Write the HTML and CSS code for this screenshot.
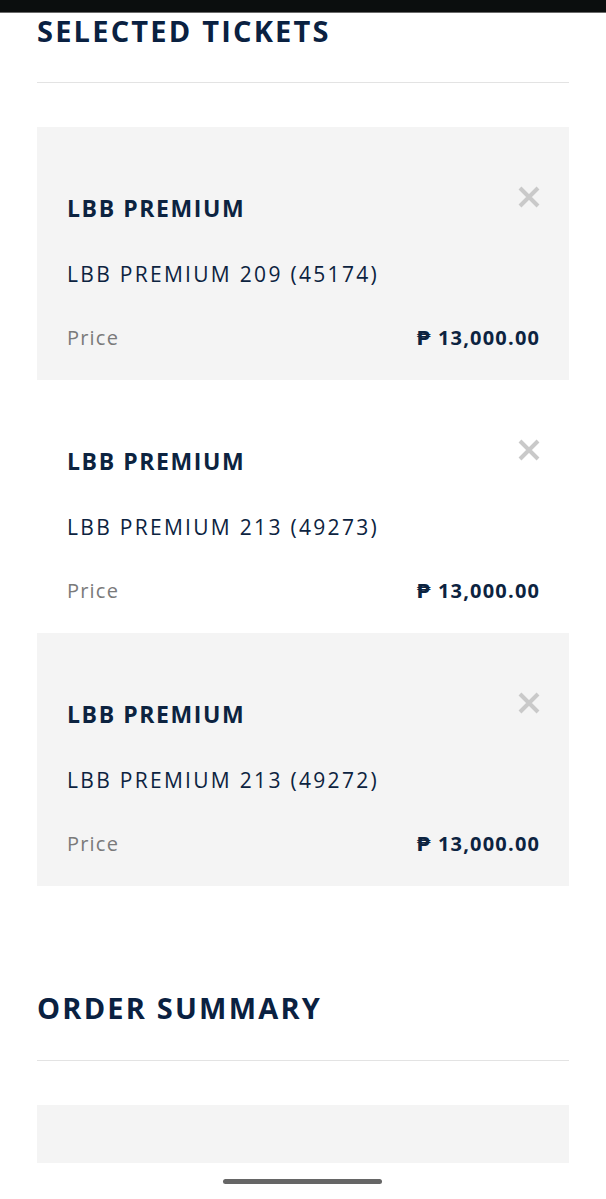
FILE: index.html
```html
<!DOCTYPE html>
<html lang="en">
<head>
<meta charset="utf-8">
<title>Selected Tickets</title>
<link rel="stylesheet" href="styles.css">
</head>
<body>
<div class="topbar"></div>
<main class="page">
  <h2 class="section-title">SELECTED TICKETS</h2>
  <hr class="divider">
  <div class="tickets">
    <div class="ticket ticket-shaded">
      <div class="ticket-head">
        <div class="ticket-title">LBB PREMIUM</div>
        <button class="close" aria-label="Remove">
          <svg viewBox="0 0 24 24" width="24" height="24"><path d="M3 3 L21 21 M21 3 L3 21" stroke="#c9c9c9" stroke-width="4" stroke-linecap="butt" fill="none"/></svg>
        </button>
      </div>
      <div class="ticket-name">LBB PREMIUM 209 (45174)</div>
      <div class="ticket-price">
        <span class="price-label">Price</span>
        <span class="price-value">₱ 13,000.00</span>
      </div>
    </div>
    <div class="ticket">
      <div class="ticket-head">
        <div class="ticket-title">LBB PREMIUM</div>
        <button class="close" aria-label="Remove">
          <svg viewBox="0 0 24 24" width="24" height="24"><path d="M3 3 L21 21 M21 3 L3 21" stroke="#c9c9c9" stroke-width="4" stroke-linecap="butt" fill="none"/></svg>
        </button>
      </div>
      <div class="ticket-name">LBB PREMIUM 213 (49273)</div>
      <div class="ticket-price">
        <span class="price-label">Price</span>
        <span class="price-value">₱ 13,000.00</span>
      </div>
    </div>
    <div class="ticket ticket-shaded">
      <div class="ticket-head">
        <div class="ticket-title">LBB PREMIUM</div>
        <button class="close" aria-label="Remove">
          <svg viewBox="0 0 24 24" width="24" height="24"><path d="M3 3 L21 21 M21 3 L3 21" stroke="#c9c9c9" stroke-width="4" stroke-linecap="butt" fill="none"/></svg>
        </button>
      </div>
      <div class="ticket-name">LBB PREMIUM 213 (49272)</div>
      <div class="ticket-price">
        <span class="price-label">Price</span>
        <span class="price-value">₱ 13,000.00</span>
      </div>
    </div>
  </div>
  <h2 class="section-title summary-title">ORDER SUMMARY</h2>
  <hr class="divider">
  <div class="summary-box"></div>
</main>
<div class="home-indicator"></div>
</body>
</html>
```

FILE: styles.css
```css
html, body {
  margin: 0;
  padding: 0;
  background: #ffffff;
  height: 1199px;
  overflow: hidden;
}
body {
  font-family: "Open Sans", "DejaVu Sans", sans-serif;
  color: #0c2340;
  position: relative;
}
.topbar {
  height: 12px;
  background: #0b0e0e;
  box-shadow: 0 1px 0 #6a6a6a;
}
.page {
  padding: 0 37px;
}
.section-title {
  margin: 1.5px 0 0;
  font-size: 29px;
  line-height: 34px;
  font-weight: 700;
  color: #0a2141;
  letter-spacing: 2.2px;
}
.summary-title {
  margin-top: 105px;
}
.divider {
  border: 0;
  border-top: 1px solid #e3e3e3;
  margin: 34.5px 0 0;
  height: 0;
}
.tickets {
  margin-top: 44px;
  display: flex;
  flex-direction: column;
}
.ticket {
  height: 253px;
  box-sizing: border-box;
  padding: 0 30px 0 30px;
}
.ticket-shaded {
  background: #f4f4f4;
}
.ticket-head {
  display: flex;
  justify-content: space-between;
  align-items: flex-start;
  padding-top: 58px;
}
.ticket-title {
  margin-top: 8px;
  font-size: 23px;
  line-height: 30px;
  font-weight: 700;
  letter-spacing: 1.6px;
}
.close {
  border: 0;
  background: transparent;
  padding: 0;
  margin: 0 -2px 0 0;
  width: 24px;
  height: 24px;
  display: block;
}
.close svg {
  display: block;
}
.ticket-name {
  margin-top: 36px;
  font-size: 21px;
  line-height: 30px;
  font-weight: 400;
  letter-spacing: 2.3px;
}
.ticket-price {
  margin-top: 34px;
  display: flex;
  justify-content: space-between;
  align-items: baseline;
  line-height: 30px;
}
.price-label {
  font-size: 20px;
  color: #7a7a7a;
  letter-spacing: 1.2px;
}
.price-value {
  font-size: 20px;
  font-weight: 700;
  letter-spacing: 1.2px;
  margin-right: -1.2px;
}
.summary-box {
  margin-top: 44px;
  height: 58px;
  background: #f4f4f4;
}
.home-indicator {
  position: absolute;
  left: 223px;
  top: 1179px;
  width: 159px;
  height: 5px;
  border-radius: 3px;
  background: #666666;
}
```
